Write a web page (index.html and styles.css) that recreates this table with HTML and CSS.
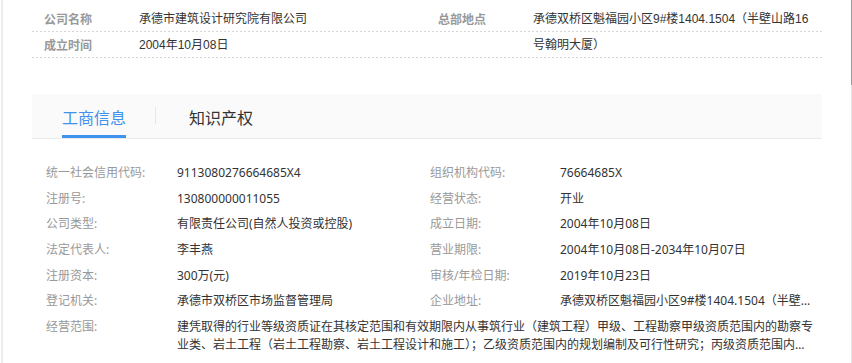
FILE: index.html
```html
<!DOCTYPE html>
<html lang="zh-CN">
<head>
<meta charset="utf-8">
<title>承德市建筑设计研究院有限公司</title>
<link rel="stylesheet" href="styles.css">
</head>
<body>
<div class="page">
  <div class="summary">
    <div class="s-label r1">公司名称</div>
    <div class="s-value r1">承德市建筑设计研究院有限公司</div>
    <div class="s-label r1 c3">总部地点</div>
    <div class="s-value addr">承德双桥区魁福园小区9#楼1404.1504（半壁山路16号翰明大厦）</div>
    <div class="s-label r2">成立时间</div>
    <div class="s-value r2">2004年10月08日</div>
    <div class="rule r1"></div>
    <div class="rule r2"></div>
  </div>

  <div class="tabs">
    <div class="tab active">工商信息</div>
    <div class="tab-sep"></div>
    <div class="tab">知识产权</div>
  </div>

  <div class="info">
    <div class="i-label">统一社会信用代码:</div><div class="i-value">9113080276664685X4</div>
    <div class="i-label">组织机构代码:</div><div class="i-value">76664685X</div>
    <div class="i-label">注册号:</div><div class="i-value">130800000011055</div>
    <div class="i-label">经营状态:</div><div class="i-value">开业</div>
    <div class="i-label">公司类型:</div><div class="i-value">有限责任公司(自然人投资或控股)</div>
    <div class="i-label">成立日期:</div><div class="i-value">2004年10月08日</div>
    <div class="i-label">法定代表人:</div><div class="i-value">李丰燕</div>
    <div class="i-label">营业期限:</div><div class="i-value">2004年10月08日-2034年10月07日</div>
    <div class="i-label">注册资本:</div><div class="i-value">300万(元)</div>
    <div class="i-label">审核/年检日期:</div><div class="i-value">2019年10月23日</div>
    <div class="i-label">登记机关:</div><div class="i-value">承德市双桥区市场监督管理局</div>
    <div class="i-label">企业地址:</div><div class="i-value ellipsis">承德双桥区魁福园小区9#楼1404.1504（半壁山路16号翰明大厦）</div>
    <div class="i-label">经营范围:</div><div class="i-value wide">建凭取得的行业等级资质证在其核定范围和有效期限内从事筑行业（建筑工程）甲级、工程勘察甲级资质范围内的勘察专业类、岩土工程（岩土工程勘察、岩土工程设计和施工）；乙级资质范围内的规划编制及可行性研究；丙级资质范围内的工程咨询服务。</div>
  </div>
</div>
<div class="scroll-thumb"></div>
<div class="scroll-track"></div>
</body>
</html>
```

FILE: styles.css
```css
html, body {
  margin: 0;
  padding: 0;
  background: #fff;
}

body {
  width: 852px;
  height: 363px;
  overflow: hidden;
  position: relative;
  font-family: "Liberation Sans", "Noto Sans CJK SC", sans-serif;
  color: #333;
}

.page {
  margin-left: 1px;
  border-left: 2px solid #ececec;
  height: 363px;
  padding: 6px 30px 0 29px;
  box-sizing: border-box;
}

/* top summary */
.summary {
  display: grid;
  grid-template-columns: 107px 299px 95px 1fr;
  grid-template-rows: 26px 26px;
  font-size: 12px;
  line-height: 26px;
}

.s-label {
  grid-column: 1;
  padding-left: 12px;
  font-family: "Noto Sans CJK SC", sans-serif;
  font-weight: 700;
  color: #999;
  white-space: nowrap;
}

.s-label.c3 {
  grid-column: 3;
  padding-left: 0;
}

.s-value {
  grid-column: 2;
  color: #333;
  white-space: nowrap;
}

.r1 { grid-row: 1; }
.r2 { grid-row: 2; }

.s-value.addr {
  grid-column: 4;
  grid-row: 1 / span 2;
  white-space: normal;
  padding-right: 8px;
  z-index: 1;
}

.rule {
  grid-column: 1 / -1;
  align-self: end;
  height: 1px;
  background: repeating-linear-gradient(to right, #d6d6d6 0 2px, transparent 2px 4px);
}

/* tabs */
.tabs {
  margin-top: 36px;
  height: 44px;
  background: #fafafa;
  border-bottom: 1px solid #ebebeb;
  display: flex;
  align-items: flex-start;
  padding-left: 30px;
  font-family: "Noto Sans CJK SC", sans-serif;
  font-size: 16px;
}

.tab {
  padding-top: 11px;
  line-height: 24px;
  padding-bottom: 6px;
  border-bottom: 3px solid transparent;
  color: #333;
  white-space: nowrap;
}

.tab.active {
  color: #3f92ee;
  border-bottom-color: #3f92ee;
}

.tab-sep {
  width: 1px;
  height: 17px;
  margin: 13px 33px 0 29px;
  background: #e6e6e6;
}

/* info grid */
.info {
  margin-top: 25px;
  padding: 0 8px 0 14px;
  display: grid;
  grid-template-columns: 131px 253px 130px 1fr;
  row-gap: 7.67px;
  font-family: "Noto Sans", "Noto Sans CJK SC", sans-serif;
  font-size: 12px;
  line-height: 18px;
}

.i-label {
  color: #999;
  white-space: nowrap;
}

.i-value {
  color: #333;
  white-space: nowrap;
}

.i-value.ellipsis {
  overflow: hidden;
  text-overflow: ellipsis;
}

.i-value.wide {
  grid-column: 2 / -1;
  white-space: normal;
  display: -webkit-box;
  -webkit-box-orient: vertical;
  -webkit-line-clamp: 2;
  overflow: hidden;
}

/* page scrollbar edge */
.scroll-thumb {
  position: absolute;
  right: 0;
  top: 0;
  width: 1px;
  height: 85px;
  background: #9b9b9b;
}

.scroll-track {
  position: absolute;
  right: 0;
  top: 85px;
  width: 1px;
  height: 278px;
  background: #e4e4e4;
}
```
